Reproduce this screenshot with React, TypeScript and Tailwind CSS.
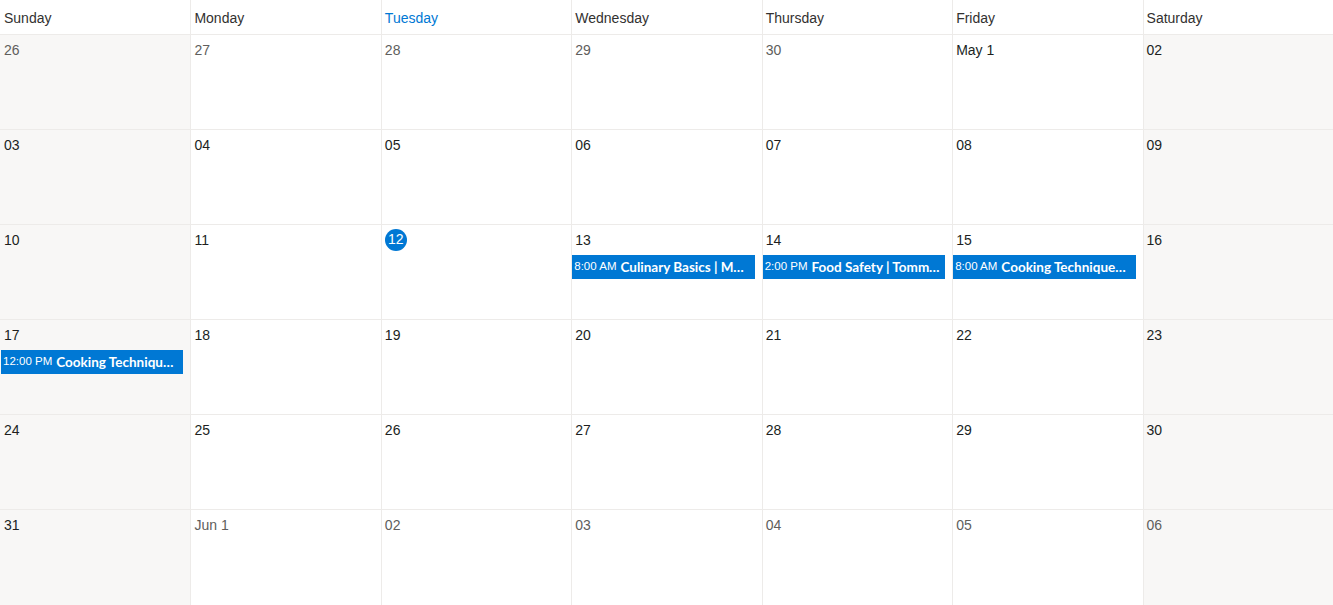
import React from "react";

type Day = {
    label: string;
    muted?: boolean;
    today?: boolean;
    events?: { time: string; title: string }[];
};

const weekDays = ["Sunday", "Monday", "Tuesday", "Wednesday", "Thursday", "Friday", "Saturday"];

const weeks: Day[][] = [
    [
        { label: "26", muted: true },
        { label: "27", muted: true },
        { label: "28", muted: true },
        { label: "29", muted: true },
        { label: "30", muted: true },
        { label: "May 1" },
        { label: "02" },
    ],
    [
        { label: "03" },
        { label: "04" },
        { label: "05" },
        { label: "06" },
        { label: "07" },
        { label: "08" },
        { label: "09" },
    ],
    [
        { label: "10" },
        { label: "11" },
        { label: "12", today: true },
        { label: "13", events: [{ time: "8:00 AM", title: "Culinary Basics | Monica Lee" }] },
        { label: "14", events: [{ time: "2:00 PM", title: "Food Safety | Tommy Chen" }] },
        { label: "15", events: [{ time: "8:00 AM", title: "Cooking Techniques | Sara Kim" }] },
        { label: "16" },
    ],
    [
        { label: "17", events: [{ time: "12:00 PM", title: "Cooking Techniques | Sara Kim" }] },
        { label: "18" },
        { label: "19" },
        { label: "20" },
        { label: "21" },
        { label: "22" },
        { label: "23" },
    ],
    [
        { label: "24" },
        { label: "25" },
        { label: "26" },
        { label: "27" },
        { label: "28" },
        { label: "29" },
        { label: "30" },
    ],
    [
        { label: "31" },
        { label: "Jun 1", muted: true },
        { label: "02", muted: true },
        { label: "03", muted: true },
        { label: "04", muted: true },
        { label: "05", muted: true },
        { label: "06", muted: true },
    ],
];

const App: React.FC = () => {
    return (
        <div
            className="w-[1333px] h-[605px] overflow-hidden bg-white text-[#323130]"
            style={{ fontFamily: '"Segoe UI", "Liberation Sans", Arial, sans-serif' }}
        >
            {/* header */}
            <div className="grid grid-cols-7 h-[35px] border-b border-[#edebe9]">
                {weekDays.map((d, i) => (
                    <div
                        key={d}
                        className={`flex items-center pt-[2px] pl-[3px] text-[14px] border-l ${
                            i === 0 ? "border-l-transparent" : "border-[#edebe9]"
                        } ${d === "Tuesday" ? "text-[#0078d4]" : "text-[#323130]"}`}
                    >
                        {d}
                    </div>
                ))}
            </div>

            {/* weeks */}
            {weeks.map((week, wi) => (
                <div
                    key={wi}
                    className={`grid grid-cols-7 h-[95px] ${wi < weeks.length - 1 ? "border-b border-[#edebe9]" : ""}`}
                >
                    {week.map((day, di) => {
                        const weekend = di === 0 || di === 6;
                        return (
                            <div
                                key={di}
                                className={`flex flex-col min-w-0 border-l ${
                                    di === 0 ? "border-l-transparent" : "border-[#edebe9]"
                                } ${weekend ? "bg-[#f8f7f6]" : "bg-white"}`}
                            >
                                <div className="h-[26px] pt-[3px] pl-[3px] flex items-center">
                                    {day.today ? (
                                        <span className="w-[22px] h-[22px] rounded-full bg-[#0078d4] text-white text-[14px] flex items-center justify-center">
                                            {day.label}
                                        </span>
                                    ) : (
                                        <span
                                            className={`text-[14px] leading-[20px] ${
                                                day.muted ? "text-[#605e5c]" : "text-[#201f1e]"
                                            }`}
                                        >
                                            {day.label}
                                        </span>
                                    )}
                                </div>
                                {day.events?.map((ev, ei) => (
                                    <div
                                        key={ei}
                                        className="mt-[4px] mr-[7px] h-[24px] bg-[#0078d4] text-white flex items-center pl-[2px] pr-[4px] overflow-hidden whitespace-nowrap"
                                    >
                                        <span className="text-[11.5px] mr-[4px] shrink-0">{ev.time}</span>
                                        <span
                                            className="text-[13.5px] font-bold truncate"
                                            style={{ fontFamily: "Lato, 'Liberation Sans', sans-serif" }}
                                        >
                                            {ev.title}
                                        </span>
                                    </div>
                                ))}
                            </div>
                        );
                    })}
                </div>
            ))}
        </div>
    );
};

export default App;
